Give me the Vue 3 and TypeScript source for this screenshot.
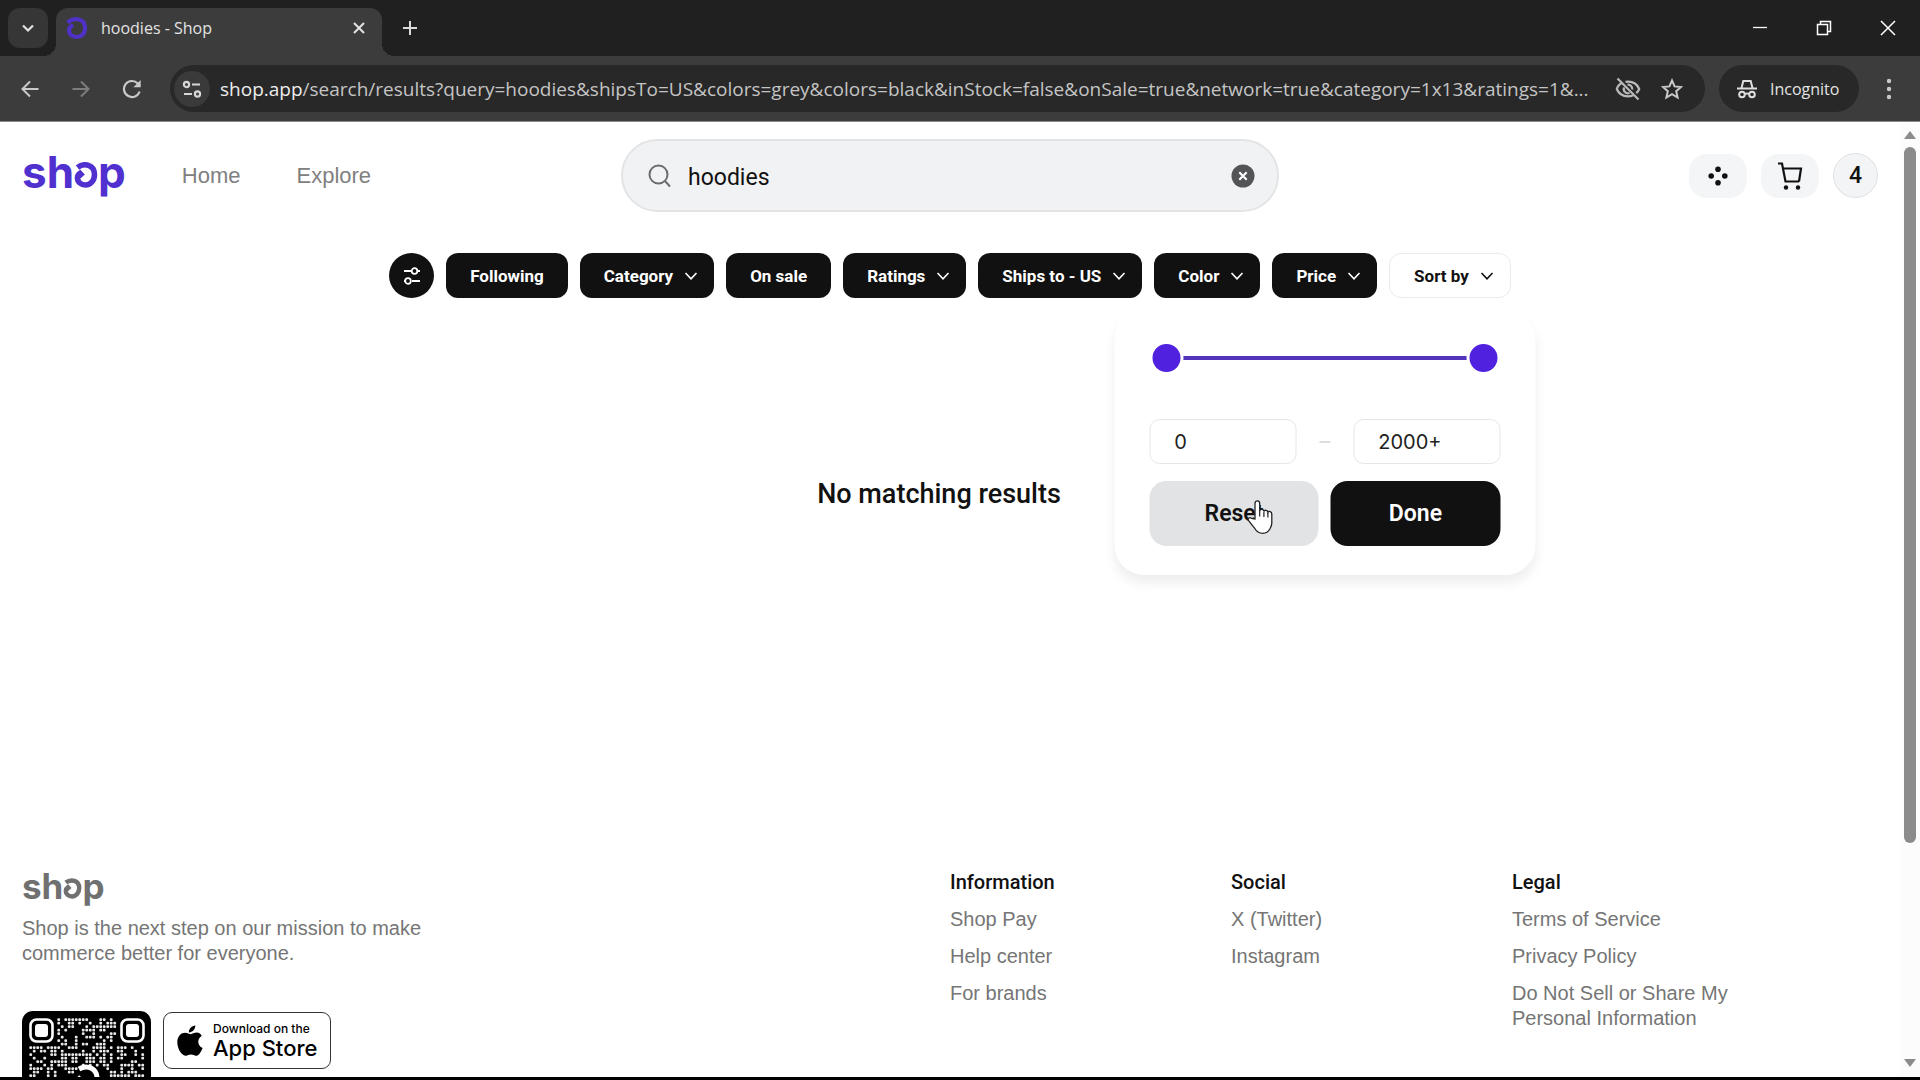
<script setup lang="ts">
import { computed, ref } from 'vue'

interface Filter {
  label: string
  menu: boolean
  active: boolean
}

const filters: Filter[] = [
  { label: 'Following', menu: false, active: true },
  { label: 'Category', menu: true, active: true },
  { label: 'On sale', menu: false, active: true },
  { label: 'Ratings', menu: true, active: true },
  { label: 'Ships to - US', menu: true, active: true },
  { label: 'Color', menu: true, active: true },
  { label: 'Price', menu: true, active: true },
  { label: 'Sort by', menu: true, active: false },
]

const footerColumns = [
  { title: 'Information', links: ['Shop Pay', 'Help center', 'For brands'] },
  { title: 'Social', links: ['X (Twitter)', 'Instagram'] },
  { title: 'Legal', links: ['Terms of Service', 'Privacy Policy', 'Do Not Sell or Share My Personal Information'] },
]

const query = ref('hoodies')
const low = ref(0)
const high = ref(2000)
const lowText = computed(() => String(low.value))
const highText = computed(() => (high.value >= 2000 ? '2000+' : String(high.value)))

function reset() {
  low.value = 0
  high.value = 2000
}

// Dot matrix of the QR code; the corners and the centre stay free for their marks.
const SIZE = 33
const dots = computed(() => {
  const out: { x: number; y: number }[] = []
  let seed = 90127
  for (let y = 0; y < SIZE; y++) {
    for (let x = 0; x < SIZE; x++) {
      seed = (seed * 1103515245 + 12345) % 2147483648
      const corner = (x < 8 && y < 8) || (x > 24 && y < 8) || (x < 8 && y > 24)
      const centre = Math.hypot(x - 16, y - 18) < 5
      if (!corner && !centre && seed / 2147483648 < 0.5) out.push({ x, y })
    }
  }
  return out
})
</script>

<template>
  <div class="window">
    <div class="tabstrip">
      <button class="tabsearch" aria-label="Search tabs">
        <svg width="14" height="14" viewBox="0 0 14 14"><path d="M2 4.5l5 5 5-5" fill="none" stroke="#e3e3e3" stroke-width="2.2" /></svg>
      </button>
      <div class="tab">
        <svg class="favicon" width="22" height="24" viewBox="0 0 22 24"><path d="M3 5.5C8 1.5 19 2 19 12c0 6-4 9-8.500 9C6 21 3 18 3 14.500c0-2 1-3.500 2.500-4.500" fill="none" stroke="#5031c8" stroke-width="4.200" stroke-linecap="round" /></svg>
        <span class="tabtitle">hoodies - Shop</span>
        <button class="icon" aria-label="Close tab">
          <svg width="12" height="12" viewBox="0 0 12 12"><path d="M1 1l10 10M11 1L1 11" stroke="#e3e3e3" stroke-width="2" /></svg>
        </button>
      </div>
      <button class="icon newtab" aria-label="New tab">
        <svg width="14" height="14" viewBox="0 0 14 14"><path d="M7 0v14M0 7h14" stroke="#dcdcdc" stroke-width="2" /></svg>
      </button>
      <div class="winctl">
        <button class="icon" aria-label="Minimize"><svg width="16" height="16" viewBox="0 0 16 16"><path d="M1 7.500h14" stroke="#fff" stroke-width="1.300" /></svg></button>
        <button class="icon" aria-label="Restore"><svg width="16" height="16" viewBox="0 0 16 16"><path d="M1.500 4.500h10v10h-10zM4.500 4.500v-3h10v10h-3" fill="none" stroke="#fff" stroke-width="1.500" /></svg></button>
        <button class="icon" aria-label="Close"><svg width="16" height="16" viewBox="0 0 16 16"><path d="M1 1l14 14M15 1L1 15" stroke="#fff" stroke-width="1.500" /></svg></button>
      </div>
    </div>

    <div class="toolbar">
      <button class="icon nav" aria-label="Back"><svg width="20" height="20" viewBox="0 0 20 20"><path d="M18.500 10H3M10 2.500L2.500 10l7.500 7.500" fill="none" stroke="#c9c9c9" stroke-width="2" /></svg></button>
      <button class="icon nav" aria-label="Forward"><svg width="20" height="20" viewBox="0 0 20 20"><path d="M1.500 10H17M10 2.500l7.500 7.500-7.500 7.500" fill="none" stroke="#7d7d7d" stroke-width="2" /></svg></button>
      <button class="icon nav" aria-label="Reload"><svg width="20" height="20" viewBox="0 0 20 20"><path d="M17.600 12.500A8 8 0 1 1 15.800 4.500L18 7" fill="none" stroke="#c9c9c9" stroke-width="2.200" /><path d="M18.700 1v7.300h-7.300z" fill="#c9c9c9" /></svg></button>
      <div class="omnibox">
        <button class="icon site" aria-label="Site information">
          <svg width="20" height="20" viewBox="0 0 20 20" fill="none" stroke="#d6d6d6" stroke-width="2.200"><circle cx="4.500" cy="5.500" r="2.600" /><path d="M10 5.500h8M2 15h8" /><circle cx="15.500" cy="15" r="2.600" /></svg>
        </button>
        <span class="url"><b>shop.app</b>/search/results?query=hoodies&amp;shipsTo=US&amp;colors=grey&amp;colors=black&amp;inStock=false&amp;onSale=true&amp;network=true&amp;category=1x13&amp;ratings=1&amp;...</span>
        <button class="icon box" aria-label="Third-party cookies blocked">
          <svg width="26" height="24" viewBox="0 0 26 24" fill="none" stroke="#b9b9b9" stroke-width="2.200"><path d="M7.500 5.500C4.500 7 2.500 9.500 1.800 12c1.800 4.500 6 7.300 11.200 7.300 2 0 3.700-.4 5.200-1.100M10.500 4.900c.8-.1 1.600-.2 2.500-.2 5.200 0 9.400 2.800 11.200 7.300-.6 1.600-1.600 3-2.900 4.100" /><path d="M9 10.500a4.300 4.300 0 0 0 5.500 5.500M12.500 7.700a4.300 4.300 0 0 1 4.800 4.800M2.500 1.500l21 21" /></svg>
        </button>
        <button class="icon box" aria-label="Bookmark this tab">
          <svg width="22" height="22" viewBox="0 0 22 22"><path d="M11 2.500l2.600 5.900 6.400.6-4.800 4.200 1.400 6.300L11 16.200l-5.600 3.300 1.400-6.300L2 9l6.400-.6z" fill="none" stroke="#c9c9c9" stroke-width="2" /></svg>
        </button>
      </div>
      <button class="incognito">
        <svg width="22" height="22" viewBox="0 0 22 22" fill="none" stroke="#dedede" stroke-width="2"><path d="M1 10.500h20M5.500 10L7.300 3h7.400l1.800 7" /><circle cx="6" cy="16.500" r="2.800" /><circle cx="16" cy="16.500" r="2.800" /><path d="M9 16q2-1.200 4 0" /></svg>
        <span>Incognito</span>
      </button>
      <button class="icon more" aria-label="Menu"><svg width="6" height="22" viewBox="0 0 6 22" fill="#c9c9c9"><circle cx="3" cy="3" r="2.200" /><circle cx="3" cy="11" r="2.200" /><circle cx="3" cy="19" r="2.200" /></svg></button>
    </div>

    <div class="viewport">
      <main class="page">
        <header class="top">
          <nav class="mainnav">
            <a href="#" class="logo" aria-label="shop">sh<svg viewBox="0 0 24 26"><path d="M3.500 5.500C10 .500 20.500 2.500 20.500 12.500c0 6-4 10.500-9 10.500-4.500 0-8-3-8-7 0-2 1-3.600 2.500-4.600l2.800 3" fill="none" stroke="currentColor" stroke-width="5.600" /></svg>p</a>
            <a href="#" class="navlink">Home</a>
            <a href="#" class="navlink">Explore</a>
          </nav>
          <label class="search">
            <svg width="24" height="24" viewBox="0 0 24 24" fill="none" stroke="#6b6c6e" stroke-width="2"><circle cx="10.500" cy="10.500" r="9" /><path d="M17 17l5 5.500" /></svg>
            <input v-model="query" type="text" aria-label="Search" />
            <button class="icon" aria-label="Clear search" @click="query = ''">
              <svg width="24" height="24" viewBox="0 0 24 24"><circle cx="12" cy="12" r="11.500" fill="#535456" /><path d="M8.300 8.300l7.400 7.400M15.700 8.300l-7.400 7.400" stroke="#fff" stroke-width="2.200" /></svg>
            </button>
          </label>
          <div class="actions">
            <button class="pill" aria-label="Apps"><svg width="20" height="20" viewBox="0 0 20 20" fill="#111"><circle cx="10" cy="3.200" r="2.800" /><circle cx="3.200" cy="10" r="2.800" /><circle cx="16.800" cy="10" r="2.800" /><circle cx="10" cy="16.800" r="2.800" /></svg></button>
            <button class="pill" aria-label="Cart"><svg width="26" height="28" viewBox="0 0 26 28" fill="none" stroke="#111" stroke-width="2.200"><path d="M1 1.500h4l3.500 18H22M6 6.500h18l-2 13" /><circle cx="9" cy="25.500" r="2.200" fill="#111" stroke="none" /><circle cx="21" cy="25.500" r="2.200" fill="#111" stroke="none" /></svg></button>
            <button class="avatar">4</button>
          </div>
        </header>

        <div class="filters">
          <button class="allfilters" aria-label="All filters">
            <svg width="18" height="20" viewBox="0 0 18 20" fill="none" stroke="#fff" stroke-width="1.800"><path d="M1 5h7M15 5h2M1 15h1M9 15h8" /><circle cx="11.500" cy="5" r="2.800" /><circle cx="5" cy="15" r="2.800" /></svg>
          </button>
          <div v-for="f in filters" :key="f.label" class="filteritem">
            <button class="filter" :class="{ plain: !f.active, menu: f.menu }">
              {{ f.label }}
              <svg v-if="f.menu" width="14" height="10" viewBox="0 0 14 10"><path d="M1.500 2L7 7.800 12.500 2" fill="none" stroke="currentColor" stroke-width="1.600" /></svg>
            </button>
            <div v-if="f.label === 'Price'" class="panel">
              <div class="slider">
                <div class="track"></div>
                <input v-model.number="low" type="range" min="0" max="2000" aria-label="Minimum price" />
                <input v-model.number="high" type="range" min="0" max="2000" aria-label="Maximum price" />
              </div>
              <div class="amounts">
                <input type="text" :value="lowText" aria-label="Minimum amount" />
                <span class="dash"></span>
                <input type="text" :value="highText" aria-label="Maximum amount" />
              </div>
              <div class="choices">
                <button class="reset" @click="reset">Reset
                  <svg class="pointer" width="28" height="36" viewBox="0 0 28 36"><path d="M8.500 20V4.500c0-3.600 4.700-3.600 4.700 0V12c.5-2.300 4-2 4.200.5.700-2 4-1.500 4 .8.900-1.500 3.900-1 3.900 1.700V24c0 3-1.300 4.500-2 6-1.500 3-3.500 4.300-7 4.300-4 0-6.500-2-8.300-5.300L1.900 21.500c-1-2.300 1.500-3.600 3.100-2.200z" fill="#fff" stroke="#222" stroke-width="1.300" /><path d="M13.200 12v5.500M17.400 13v5M21.400 14v4.500" stroke="#222" stroke-width="1.200" /></svg>
                </button>
                <button class="done">Done</button>
              </div>
            </div>
          </div>
        </div>

        <section class="results"><h1>No matching results</h1></section>

        <footer class="footer">
          <div class="about">
            <a href="#" class="logo small" aria-label="shop">sh<svg viewBox="0 0 24 26"><path d="M3.500 5.500C10 .500 20.500 2.500 20.500 12.500c0 6-4 10.500-9 10.500-4.500 0-8-3-8-7 0-2 1-3.600 2.500-4.600l2.800 3" fill="none" stroke="currentColor" stroke-width="5.600" /></svg>p</a>
            <p>Shop is the next step on our mission to make<br />commerce better for everyone.</p>
            <div class="stores">
              <svg class="qr" width="129" height="129" viewBox="0 0 129 129" role="img" aria-label="QR code">
                <rect width="129" height="129" rx="11" fill="#000" />
                <rect v-for="(d, i) in dots" :key="i" :x="7.300 + d.x * 3.500" :y="7.300 + d.y * 3.500" width="2.800" height="2.800" rx="1" fill="#e8e8e8" />
                <g v-for="p in [[8, 8], [99, 8], [8, 99]]" :key="p.join()" :transform="`translate(${p[0]} ${p[1]})`">
                  <rect x="0.500" y="0.500" width="22" height="22" rx="6" fill="none" stroke="#fff" stroke-width="2.600" />
                  <rect x="5" y="5" width="13" height="13" rx="3" fill="#fff" />
                </g>
                <path d="M57 58c9-5 18 0 18 9 0 7-5 11-11 11s-9-4-9-8l4-4" fill="none" stroke="#fff" stroke-width="5" />
              </svg>
              <a href="#" class="appstore">
                <svg width="26" height="32" viewBox="0 0 26 32"><path d="M18.300 0.500c.2 3.700-3 7-6.400 6.900C11.500 4 15 .700 18.300.500zM24.700 11c-5 3-4.300 9.800.9 12-1.600 4.200-3.900 7.800-6.600 7.800-2 0-2.600-1.200-5-1.200s-3.200 1.200-5 1.200C4.600 30.800.300 23.800.300 17.300c0-6.400 4-9.600 7.800-9.600 2.400 0 4.200 1.500 5.700 1.500 1.400 0 3.500-1.600 6.200-1.600 1.700 0 3.500.9 4.700 3.400z" fill="#000" /></svg>
                <span class="storetext"><span class="dl">Download on the</span><span class="as">App Store</span></span>
              </a>
            </div>
          </div>
          <div class="columns">
            <div v-for="c in footerColumns" :key="c.title" class="column">
              <h2>{{ c.title }}</h2>
              <a v-for="l in c.links" :key="l" href="#">{{ l }}</a>
            </div>
          </div>
        </footer>
      </main>
      <div class="scrollbar">
        <svg width="12" height="8" viewBox="0 0 12 8"><path d="M6 0l6 8H0z" fill="#8b8b8b" /></svg>
        <div class="rail"><div class="thumb"></div></div>
        <svg width="12" height="8" viewBox="0 0 12 8"><path d="M6 8l6-8H0z" fill="#8b8b8b" /></svg>
      </div>
    </div>
  </div>
</template>

<style>
body {
  margin: 0;
  background: #000;
}
</style>

<style scoped>
* {
  box-sizing: border-box;
}
button {
  border: 0;
  margin: 0;
  padding: 0;
  background: none;
  font: inherit;
  color: inherit;
  cursor: pointer;
}
a {
  text-decoration: none;
  color: inherit;
}
h1,
h2,
p {
  margin: 0;
}
svg {
  display: block;
  flex: none;
}
.window {
  height: 100vh;
  padding-bottom: 3px;
  display: flex;
  flex-direction: column;
  background: #000;
  font-family: "Liberation Sans", Arial, sans-serif;
}
.icon {
  display: flex;
  align-items: center;
  justify-content: center;
  flex: none;
}

/* Browser chrome */
.tabstrip,
.toolbar {
  font-family: "Open Sans", "Noto Sans", sans-serif;
  font-size: 16px;
  flex: none;
}
.tabstrip {
  height: 56px;
  padding: 8px 12px 0 8px;
  display: flex;
  background: #202020;
}
.tabsearch {
  width: 40px;
  height: 40px;
  border-radius: 12px;
  background: #363636;
  display: flex;
  align-items: center;
  justify-content: center;
}
.tab {
  position: relative;
  width: 326px;
  margin-left: 8px;
  padding: 0 11px 8px 10px;
  display: flex;
  align-items: center;
  background: #3c3c3c;
  border-radius: 12px 12px 0 0;
}
.tab::before,
.tab::after {
  content: "";
  position: absolute;
  bottom: 0;
  width: 12px;
  height: 12px;
}
.tab::before {
  right: 100%;
  background: radial-gradient(circle at 0 0, transparent 12px, #3c3c3c 12px);
}
.tab::after {
  left: 100%;
  background: radial-gradient(circle at 100% 0, transparent 12px, #3c3c3c 12px);
}
.tabtitle {
  flex: 1;
  margin-left: 13px;
  color: #e3e3e3;
}
.tab .icon {
  width: 24px;
  height: 24px;
}
.newtab {
  width: 40px;
  height: 40px;
  margin-left: 8px;
}
.winctl {
  margin-left: auto;
  display: flex;
}
.winctl .icon {
  width: 40px;
  height: 40px;
  margin-left: 24px;
}
.toolbar {
  height: 66px;
  padding: 0 20px 0 10px;
  display: flex;
  align-items: center;
  background: #3c3c3c;
  border-bottom: 1px solid #8a8a8a;
}
.nav {
  width: 40px;
  height: 40px;
  margin-right: 11px;
}
.omnibox {
  flex: 1;
  min-width: 0;
  height: 47px;
  margin-left: 7px;
  padding: 0 22px 0 4px;
  display: flex;
  align-items: center;
  border-radius: 24px;
  background: #282828;
}
.site {
  width: 36px;
  height: 36px;
  border-radius: 50%;
  background: #3a3a3a;
}
.url {
  flex: 1;
  min-width: 0;
  margin-left: 10px;
  overflow: hidden;
  white-space: nowrap;
  font-size: 19px;
  color: #c4c4c4;
}
.url b {
  font-weight: 400;
  color: #eee;
}
.box {
  margin-left: 20px;
}
.incognito {
  width: 140px;
  height: 47px;
  margin-left: 14px;
  padding-left: 17px;
  display: flex;
  align-items: center;
  gap: 12px;
  border-radius: 24px;
  background: #282828;
  color: #e3e3e3;
}
.more {
  width: 22px;
  height: 40px;
  margin-left: 19px;
}

/* Page */
.viewport {
  flex: 1;
  min-height: 0;
  display: flex;
  background: #fff;
}
.page {
  flex: 1;
  min-width: 0;
  overflow: hidden;
  color: #111;
}
.scrollbar {
  width: 20px;
  padding: 9px 0 10px;
  display: flex;
  flex-direction: column;
  align-items: center;
  gap: 8px;
  background: #fcfcfc;
}
.rail {
  flex: 1;
  width: 12px;
}
.thumb {
  height: 77%;
  border-radius: 6px;
  background: #8b8b8b;
}
.top {
  padding: 17px 22px 0;
  display: flex;
  align-items: center;
}
.mainnav,
.actions {
  flex: 1;
  display: flex;
  align-items: center;
}
.actions {
  justify-content: flex-end;
  gap: 14px;
}
.logo {
  display: flex;
  align-items: baseline;
  font-family: Inter, sans-serif;
  font-weight: 700;
  font-size: 44px;
  line-height: 44px;
  color: #5130d0;
}
.logo svg {
  width: 24px;
  height: 26px;
}
.mainnav .logo {
  padding-bottom: 8px;
}
.logo.small {
  font-size: 35px;
  line-height: 32px;
  color: #707070;
}
.logo.small svg {
  width: 19px;
  height: 21px;
}
.navlink {
  margin-left: 56px;
  font-size: 22px;
  color: #808080;
}
.search {
  width: 658px;
  max-width: 40%;
  height: 73px;
  padding: 0 22px 0 25px;
  display: flex;
  align-items: center;
  border: 2px solid #e3e4e5;
  border-radius: 37px;
  background: #f1f2f4;
}
.search input {
  flex: 1;
  min-width: 0;
  margin: 0 16px;
  padding: 3px 0 0;
  border: 0;
  outline: 0;
  background: none;
  font-family: Roboto, sans-serif;
  font-size: 23px;
  color: #111;
}
.pill {
  width: 58px;
  height: 44px;
  display: flex;
  align-items: center;
  justify-content: center;
  border-radius: 18px;
  background: #f4f5f7;
}
.avatar {
  width: 45px;
  height: 45px;
  border: 1px solid #e0e1e3;
  border-radius: 50%;
  background: #f3f4f6;
  font-family: Roboto, sans-serif;
  font-weight: 500;
  font-size: 23px;
}
.filters {
  margin-top: 41px;
  display: flex;
  justify-content: center;
  gap: 12px;
}
.allfilters {
  width: 45px;
  height: 45px;
  display: flex;
  align-items: center;
  justify-content: center;
  border-radius: 50%;
  background: #111;
}
.filteritem {
  position: relative;
}
.filter {
  height: 45px;
  padding: 0 24px;
  display: flex;
  align-items: center;
  gap: 11px;
  border-radius: 12px;
  background: #111;
  color: #fff;
  font-family: Roboto, sans-serif;
  font-size: 17px;
  font-weight: 700;
  white-space: nowrap;
}
.filter.menu {
  padding-right: 16px;
}
.filter.plain {
  background: #fff;
  color: #111;
  border: 1px solid #ebebeb;
}
.panel {
  position: absolute;
  z-index: 2;
  top: 100%;
  left: 50%;
  width: 421px;
  margin-top: 12px;
  padding: 31px 35px 29px;
  transform: translateX(-50%);
  border-radius: 30px;
  background: #fff;
  box-shadow: 0 8px 12px rgba(0, 0, 0, 0.07);
}
.slider {
  position: relative;
  height: 34px;
}
.track {
  height: 4px;
  margin: 0 17px;
  position: relative;
  top: 15px;
  background: #5433bd;
}
.slider input {
  position: absolute;
  inset: 0;
  width: 100%;
  height: 34px;
  margin: 0;
  appearance: none;
  background: none;
  pointer-events: none;
}
.slider input::-webkit-slider-thumb {
  appearance: none;
  width: 34px;
  height: 34px;
  border: 3px solid #fff;
  border-radius: 50%;
  background: #5022e0;
  pointer-events: auto;
}
.amounts {
  margin-top: 44px;
  display: flex;
  align-items: center;
  justify-content: space-between;
}
.amounts input {
  width: 147px;
  height: 45px;
  padding: 0 24px;
  border: 1px solid #e6e6e6;
  border-radius: 10px;
  background: #fff;
  font-family: Inter, sans-serif;
  font-size: 20px;
  color: #222;
}
.dash {
  width: 11px;
  height: 2px;
  background: #ddd;
}
.choices {
  margin-top: 17px;
  display: flex;
  gap: 12px;
}
.choices button {
  position: relative;
  flex: 1;
  height: 65px;
  border-radius: 17px;
  font-family: Roboto, sans-serif;
  font-weight: 600;
  font-size: 23px;
}
.choices .reset {
  background: #e2e3e5;
}
.choices .done {
  background: #111;
  color: #fff;
}
.pointer {
  position: absolute;
  top: 18px;
  left: 97px;
}
.results {
  height: 572px;
  padding: 179px 22px 0 0;
  text-align: center;
}
.results h1 {
  font-family: Roboto, sans-serif;
  font-weight: 500;
  font-size: 27px;
  line-height: 34px;
}
.footer {
  padding: 0 22px;
  display: flex;
  font-size: 20px;
  line-height: 25px;
  color: #757575;
}
.about,
.columns {
  flex: 1;
}
.about p {
  margin-top: 14px;
}
.stores {
  margin-top: 45px;
  display: flex;
  align-items: flex-start;
  gap: 12px;
}
.appstore {
  width: 168px;
  height: 57px;
  margin-top: 1px;
  padding-left: 13px;
  display: flex;
  align-items: center;
  gap: 10px;
  border: 1px solid #333;
  border-radius: 9px;
  color: #000;
  font-family: Inter, sans-serif;
}
.storetext {
  display: flex;
  flex-direction: column;
}
.dl {
  font-size: 12px;
  line-height: 15px;
  font-weight: 500;
  white-space: nowrap;
}
.as {
  font-size: 22px;
  line-height: 24px;
  font-weight: 500;
  white-space: nowrap;
}
.columns {
  display: flex;
  gap: 24px;
}
.column {
  width: 257px;
  display: flex;
  flex-direction: column;
  gap: 12px;
}
.column h2 {
  font-family: Roboto, sans-serif;
  font-weight: 500;
  font-size: 20px;
  line-height: 25px;
  color: #111;
}
</style>
